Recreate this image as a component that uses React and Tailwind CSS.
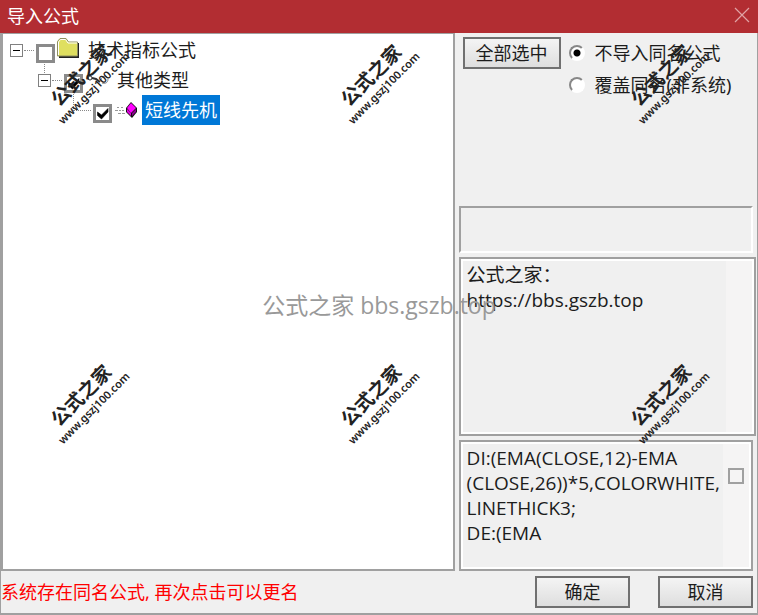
import React, { useState } from "react";

const WATERMARKS = [1, 2, 3, 4, 5, 6];

const NOTE = "公式之家：\nhttps://bbs.gszb.top";
const SOURCE = "DI:(EMA(CLOSE,12)-EMA\n(CLOSE,26))*5,COLORWHITE,\nLINETHICK3;\nDE:(EMA";

function Expander({ label }) {
    return (
        <button aria-label={label} className="flex size-[13px] shrink-0 items-center justify-center border border-[#808080] bg-white">
            <span className="h-px w-[7px] bg-black" />
        </button>
    );
}

function TreeCheck({ id, checked, onChange }) {
    return (
        <span className="mt-[7px] grid size-[19px] shrink-0">
            <input
                id={id}
                type="checkbox"
                checked={checked}
                onChange={onChange}
                className="col-start-1 row-start-1 size-[19px] appearance-none border-3 border-[#8a8a8a] bg-white"
            />
            {checked && (
                <svg viewBox="0 0 19 19" className="pointer-events-none col-start-1 row-start-1 size-[19px]">
                    <path d="M4.500 8v3.500l4 3.500 6.500-7V4.500L8.500 11z" fill="#000" stroke="#000" strokeWidth=".6" />
                </svg>
            )}
        </span>
    );
}

function FolderIcon() {
    return (
        <svg viewBox="0 0 24 22" className="mb-1 h-[22px] w-6 shrink-0">
            <path d="M3 19h18V6h2v15H3z" fill="#222" />
            <path d="M1.500 19V4.500L4 1.500h6L12.500 5H21.500V19z" fill="#dfdf60" stroke="#8f8f60" />
            <path d="M2.500 18V5l2-2.500h5L12 6h9" fill="none" stroke="#fff" />
        </svg>
    );
}

function FunctionIcon() {
    return (
        <svg viewBox="0 0 24 18" className="h-[18px] w-6 shrink-0" fill="none" stroke="#333">
            <circle cx="3" cy="7" r="2" />
            <path d="M5 7l4 1 4 3" strokeWidth="2" />
            <path d="M14 10c0-4 3-6 6-4M21 8c0 4-3 5-6 4" stroke="#888" />
        </svg>
    );
}

function FormulaIcon() {
    return (
        <svg viewBox="0 0 26 18" className="h-[18px] w-[26px] shrink-0">
            <path d="M3 6.500h2M7 6.500h2M1 9.500h3M5 9.500h2M8 9.500h2M4 12.500h3M8 12.500h3" stroke="#999" />
            <path d="M17 1l6 6v4l-5 6-6-6V7z" fill="#111" />
            <path d="M17 2l5 5-5 5-4-5z" fill="#f0f" />
            <path d="M13 8l4 4v3l-4-4z" fill="#e000e0" />
            <path d="M18 12l4-4v3l-4 4z" fill="#900090" />
        </svg>
    );
}

function MemoBox({ label, value, className, children }) {
    return (
        <div className={`flex border-2 border-[#a0a0a0] bg-[#f0f0f0] ${className}`}>
            <div className="flex flex-1 border-2 border-white">
                <textarea
                    aria-label={label}
                    readOnly
                    wrap="off"
                    value={value}
                    className="min-w-0 flex-1 resize-none overflow-hidden pt-[2px] pl-1 font-['Open_Sans','Noto_Sans_CJK_SC',sans-serif] text-[19px] leading-[25px] outline-none"
                />
                <div className="flex w-[26px] justify-center bg-[#f5f4f4]">{children}</div>
            </div>
        </div>
    );
}

export default function App() {
    const [checks, setChecks] = useState({ root: false, other: true, leaf: true });
    const [mode, setMode] = useState("skip");

    const toggle = key => setChecks(prev => ({ ...prev, [key]: !prev[key] }));

    const selectAll = () => setChecks({ root: true, other: true, leaf: true });

    const radioClass =
        "size-4 shrink-0 appearance-none rounded-full border-2 border-t-[#888] border-l-[#888] border-r-white border-b-white bg-white checked:bg-[radial-gradient(circle,#000_3px,#fff_4px)]";
    const buttonClass =
        "h-8 border-2 border-[#707070] bg-linear-to-b from-[#f4f4f4] to-[#dedede] text-center leading-7";

    return (
        <div className="relative flex min-h-screen flex-col overflow-hidden bg-[#f0f0f0] font-['Noto_Sans','Noto_Sans_CJK_SC',sans-serif] text-[18px] text-[#1c1c1c]">
            <header className="flex h-[33px] items-center justify-between bg-[#b22d32] pr-2 pb-[2px] pl-[7px] text-white">
                <h1 className="leading-8">导入公式</h1>
                <button aria-label="关闭" className="mb-[2px]">
                    <svg viewBox="0 0 16 16" className="size-4" stroke="#e0a3a5" strokeWidth="1.200">
                        <path d="M1 1l14 14M15 1L1 15" />
                    </svg>
                </button>
            </header>

            <div className="flex flex-1 flex-col border-x border-b-2 border-[#a0a0a0]">
                <main className="grid flex-1 grid-cols-[3fr_2fr]">
                    <div className="border-2 border-t border-[#a0a0a0] bg-white pt-px pl-[7px]">
                        <div className="flex h-[30px] items-center">
                            <Expander label="技术指标公式" />
                            <span className="ml-px w-[10px] border-t border-dotted border-[#888]" />
                            <span className="ml-[2px] flex"><TreeCheck id="root" checked={checks.root} onChange={() => toggle("root")} /></span>
                            <span className="ml-px flex"><FolderIcon /></span>
                            <label htmlFor="root" className="ml-2 leading-[30px]">技术指标公式</label>
                        </div>
                        <div className="relative flex h-[30px] items-center pl-7">
                            <span className="absolute -top-1 left-[34px] h-3 border-l border-dotted border-[#888]" />
                            <Expander label="其他类型" />
                            <span className="ml-px w-[10px] border-t border-dotted border-[#888]" />
                            <span className="ml-[2px] flex"><TreeCheck id="other" checked={checks.other} onChange={() => toggle("other")} /></span>
                            <span className="ml-1 flex"><FunctionIcon /></span>
                            <label htmlFor="other" className="ml-[6px] leading-[30px]">其他类型</label>
                        </div>
                        <div className="relative flex h-[30px] items-center pl-[63px]">
                            <span className="absolute -top-1 left-[63px] h-5 border-l border-dotted border-[#888]" />
                            <span className="w-[18px] border-t border-dotted border-[#888]" />
                            <span className="ml-[2px] flex"><TreeCheck id="leaf" checked={checks.leaf} onChange={() => toggle("leaf")} /></span>
                            <span className="ml-[2px] flex"><FormulaIcon /></span>
                            <label htmlFor="leaf" className="ml-[2px] bg-[#0078d7] px-[3px] leading-[30px] text-white">短线先机</label>
                        </div>
                    </div>

                    <div className="flex min-w-0 flex-col pl-1">
                        <div className="flex flex-1 items-start pt-1 pl-1">
                            <button onClick={selectAll} className={`${buttonClass} w-[98px] shrink-0`}>全部选中</button>
                            <div className="ml-2 flex flex-col whitespace-nowrap">
                                <label className="flex h-8 items-center gap-[10px]">
                                    <input type="radio" name="mode" checked={mode === "skip"} onChange={() => setMode("skip")} className={radioClass} />
                                    不导入同名公式
                                </label>
                                <label className="flex h-8 items-center gap-[10px]">
                                    <input type="radio" name="mode" checked={mode === "cover"} onChange={() => setMode("cover")} className={radioClass} />
                                    覆盖同名(非系统)
                                </label>
                            </div>
                        </div>
                        <div className="mr-1 h-[47px] border-2 border-t-[#a0a0a0] border-r-white border-b-white border-l-[#a0a0a0]" />
                        <MemoBox label="公式说明" value={NOTE} className="mt-1 mr-px h-[179px]" />
                        <MemoBox label="公式源码" value={SOURCE} className="mt-1 mr-1 h-[131px]">
                            <span className="mt-6 size-4 border-2 border-[#a0a0a0]" />
                        </MemoBox>
                    </div>
                </main>

                <footer className="flex h-[42px] items-center">
                    <p className="flex-1 text-[#f00]">系统存在同名公式, 再次点击可以更名</p>
                    <button className={`${buttonClass} mr-7 w-[95px]`}>确定</button>
                    <button className={`${buttonClass} mr-1 w-[95px]`}>取消</button>
                </footer>
            </div>

            <div className="pointer-events-none absolute inset-0 flex items-center justify-center pb-1 font-['Open_Sans','Noto_Sans_CJK_SC',sans-serif] text-[23px] text-[#999]">
                公式之家 bbs.gszb.top
            </div>
            <div className="pointer-events-none absolute inset-0 grid auto-rows-[320px] grid-cols-[290px_290px_290px] overflow-hidden">
                {WATERMARKS.map(n => (
                    <div key={n} className="flex h-[162px] w-[174px] items-center justify-center">
                        <div className="-rotate-45 text-center whitespace-nowrap text-[#222]">
                            <p className="text-[19px] leading-[20px] font-bold">公式之家</p>
                            <p className="text-[11px] leading-[16px] font-semibold">www.gszj100.com</p>
                        </div>
                    </div>
                ))}
            </div>
        </div>
    );
}
